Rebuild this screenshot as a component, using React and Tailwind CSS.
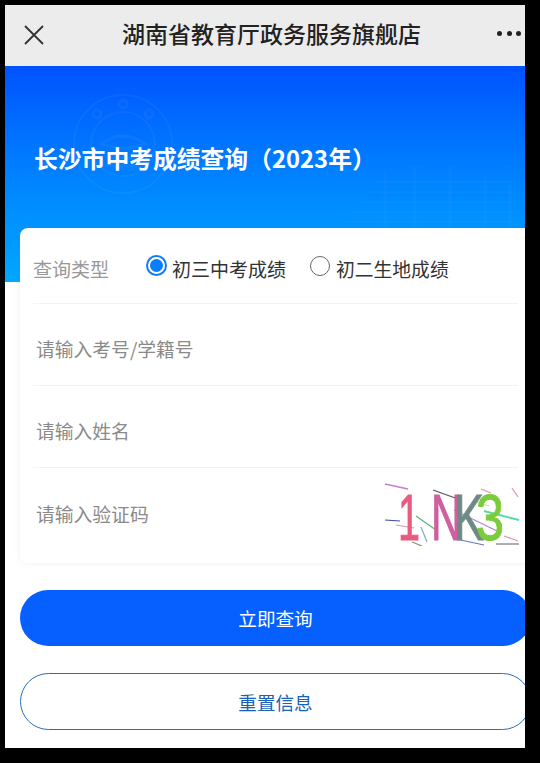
const FONT = 'font-["Noto_Sans_CJK_SC","Noto_Sans",sans-serif]'

// 校徽水印
function Seal() {
  return (
    <svg className="absolute left-[66px] top-[26px]" width="104" height="104" viewBox="0 0 104 104" fill="none" stroke="#ffffff" strokeOpacity="0.045">
      <circle cx="52" cy="52" r="49" strokeWidth="2" />
      <circle cx="52" cy="52" r="32" strokeWidth="2" />
      <path d="M30 52 Q52 36 74 52 Q52 60 30 52Z" strokeWidth="3" />
      <path d="M34 66H70M34 74H70M42 60V78M52 60V78M62 60V78" strokeWidth="3" />
      <circle cx="52" cy="12" r="4" strokeWidth="3" />
      <circle cx="26" cy="22" r="4" strokeWidth="3" />
      <circle cx="78" cy="22" r="4" strokeWidth="3" />
    </svg>
  )
}

// 右下角的网格底纹
function GridPattern() {
  const rows = [0, 1, 2, 3, 4, 5, 6, 7, 8, 9, 10]
  return (
    <svg className="absolute right-0 bottom-0" width="260" height="120" viewBox="0 0 260 120" fill="none" stroke="#ffffff" strokeOpacity="0.022">
      {rows.map((i) => (
        <path key={i} d={`M${110 - i * 8} ${20 + i * 10}H250`} strokeWidth="2" />
      ))}
      <path d="M120 10V120M150 5V120M185 5V120M220 15V120M245 20V120" strokeWidth="3" />
    </svg>
  )
}

function Captcha() {
  return (
    <svg width="136" height="64" viewBox="0 0 136 64" className="shrink-0">
      <g fill="none" strokeWidth="1.2">
        <path d="M1 2L24 7" stroke="#c77bd1" strokeWidth="1.5" />
        <path d="M1 38L16 39" stroke="#3b4a8f" />
        <path d="M12 43L30 46" stroke="#d59ab0" />
        <path d="M49 8L74 17" stroke="#555555" />
        <path d="M97 7L107 11" stroke="#e58fb5" />
        <path d="M128 6L134 15" stroke="#e58fb5" />
        <path d="M32 34L52 48" stroke="#5fae7c" />
        <path d="M37 45L43 60" stroke="#6fb7b4" />
        <path d="M70 28L115 50" stroke="#b183d6" />
        <path d="M100 29L135 38" stroke="#55dba6" strokeWidth="2" />
        <path d="M92 20L105 24" stroke="#d8d29a" />
        <path d="M120 54L134 59" stroke="#e58fb5" />
        <path d="M72 57L100 63" stroke="#6a74c9" />
        <path d="M112 62H135" stroke="#777777" />
        <path d="M28 60L38 64" stroke="#7a9a6a" />
      </g>
      <g fontFamily="'Liberation Sans', sans-serif" fontSize="65" strokeWidth="1">
        <text x="14" y="58" fill="#ea5b82" stroke="#ea5b82" textLength="22" lengthAdjust="spacingAndGlyphs">1</text>
        <text x="47" y="58" fill="#cf5f9f" stroke="#cf5f9f" textLength="31" lengthAdjust="spacingAndGlyphs">N</text>
        <text x="70" y="58" fill="#6f8a85" stroke="#6f8a85" textLength="30" lengthAdjust="spacingAndGlyphs">K</text>
        <text x="92" y="58" fill="#7ccb3c" stroke="#7ccb3c" textLength="28" lengthAdjust="spacingAndGlyphs">3</text>
      </g>
    </svg>
  )
}

function App() {
  return (
    <div className={`h-[763px] w-[540px] overflow-hidden bg-black pl-[5px] pt-[5px] ${FONT}`}>
      <div className="h-[743px] w-[520px] overflow-hidden bg-white">
        {/* 顶部标题栏 */}
        <div className="flex h-[61px] items-center bg-[#ececec] pl-[19px] pr-[4px] text-[#222222]">
          <svg width="20" height="20" viewBox="0 0 20 20" fill="none" stroke="#333333" strokeWidth="1.8" className="shrink-0 -mt-[2px]">
            <path d="M1 1L19 19M19 1L1 19" />
          </svg>
          <div className="flex-1 pb-[6px] pl-[2px] text-center text-[23px] font-medium leading-[34px]">湖南省教育厅政务服务旗舰店</div>
          <div className="-mt-[4px] flex shrink-0 gap-[4.5px]">
            <span className="h-[5px] w-[5px] rounded-full bg-[#222222]" />
            <span className="h-[5px] w-[5px] rounded-full bg-[#222222]" />
            <span className="h-[5px] w-[5px] rounded-full bg-[#222222]" />
          </div>
        </div>

        {/* 蓝色横幅 */}
        <div className="relative h-[216px] overflow-hidden bg-gradient-to-b from-[#0052ff] to-[#00a8ff] pl-[29px] pt-[75px]">
          <Seal />
          <GridPattern />
          <h1 className="relative text-[23.8px] font-semibold leading-[34px] text-white">长沙市中考成绩查询（2023年）</h1>
        </div>

        {/* 查询表单 */}
        <div className="relative -mt-[54px] ml-[15px] h-[335px] w-[520px] rounded-l-lg bg-white pl-[13px] shadow-[0_0_6px_rgba(80,120,220,0.12)]">
          <div className="flex h-[76px] w-[485px] items-center border-b border-[#f3f3f3] text-[19px]">
            <span className="w-[113px] pt-[7px] text-[#999999]">查询类型</span>
            <span className="flex h-[21px] w-[21px] items-center justify-center rounded-full border-2 border-[#0a7cff]">
              <span className="h-[13px] w-[13px] rounded-full bg-[#0a7cff]" />
            </span>
            <span className="ml-[5px] w-[138px] pt-[7px] text-[#333333]">初三中考成绩</span>
            <span className="h-[20px] w-[20px] rounded-full border border-[#666666]" />
            <span className="ml-[6px] pt-[7px] text-[18.8px] text-[#333333]">初二生地成绩</span>
          </div>
          <div className="flex h-[82px] w-[485px] items-center border-b border-[#f3f3f3] pl-[3px] pt-[9px] text-[18.8px] text-[#8a8a8a]">请输入考号/学籍号</div>
          <div className="flex h-[82px] w-[485px] items-center border-b border-[#f3f3f3] pl-[3px] pt-[9px] text-[18.8px] text-[#8a8a8a]">请输入姓名</div>
          <div className="flex h-[91px] items-center pl-[3px] text-[18.8px] text-[#8a8a8a]">
            <span className="w-[348px] pt-[2px]">请输入验证码</span>
            <Captcha />
          </div>
        </div>

        {/* 按钮 */}
        <div className="ml-[15px] flex w-[511px] flex-col gap-[27px] pt-[27px] text-[18.6px]">
          <button className="h-[56px] rounded-full bg-[#0660ff] text-white">立即查询</button>
          <button className="h-[57px] rounded-full border border-[#2a6fb8] bg-white text-[#1a62b5]">重置信息</button>
        </div>
      </div>
    </div>
  )
}

export default App
